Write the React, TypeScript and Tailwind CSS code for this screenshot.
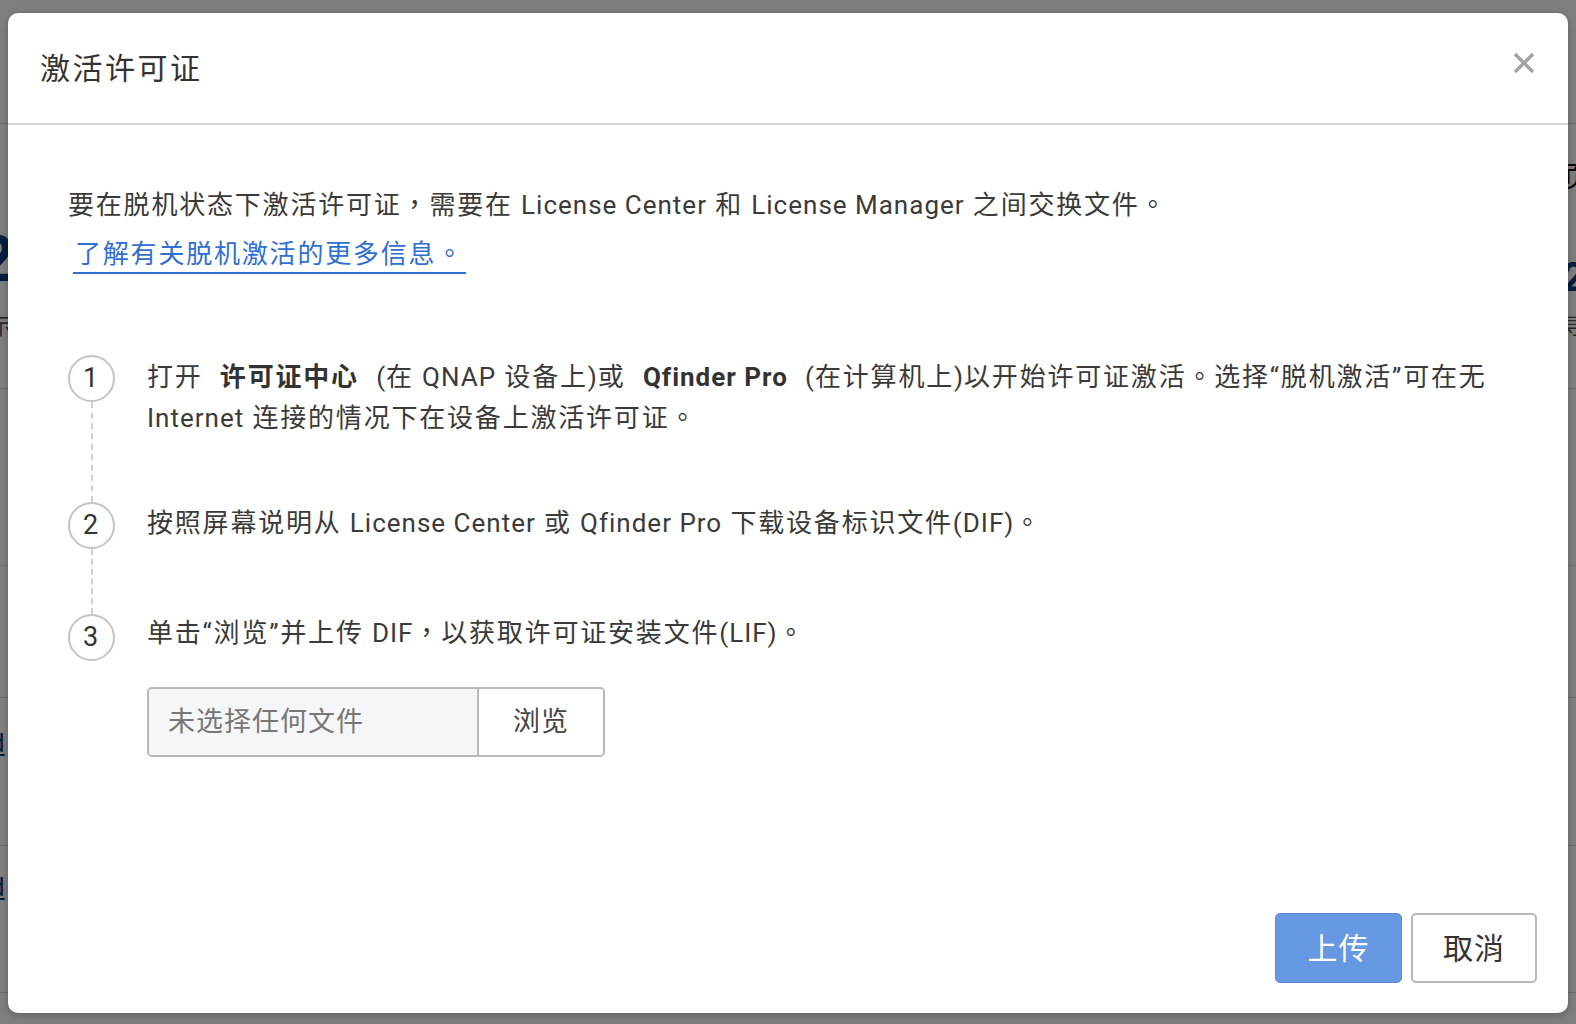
import React from "react";

const FONT = 'Roboto, "Noto Sans CJK TC", "Noto Sans CJK SC", sans-serif';

function L({ children }: { children: React.ReactNode }) {
  return <span className="tracking-[1px]">{children}</span>;
}

function Background() {
  return (
    <div className="absolute inset-0 bg-white overflow-hidden">
      <div className="absolute left-0 right-0 top-[123px] h-px bg-[#d8d8d8]" />
      <div className="absolute left-0 right-0 top-[388px] h-px bg-[#d8d8d8]" />
      <div className="absolute left-0 right-0 top-[565px] h-px bg-[#e0e0e0]" />
      <div className="absolute left-0 right-0 top-[697px] h-px bg-[#d8d8d8]" />
      <div className="absolute left-0 right-0 top-[845px] h-px bg-[#d8d8d8]" />
      <div className="absolute left-0 right-0 top-[992px] h-px bg-[#d8d8d8]" />
      <div className="absolute left-[-22px] top-[228px] text-[64px] font-bold leading-none text-[#0b3f7f]">2</div>
      <div className="absolute left-[-10px] top-[316px] text-[22px] leading-none text-[#555]">示</div>
      <div className="absolute left-[-10px] top-[730px] text-[26px] leading-none text-[#0b3f7f] underline">d</div>
      <div className="absolute left-[-10px] top-[874px] text-[26px] leading-none text-[#0b3f7f] underline">d</div>
      <div className="absolute left-[1562px] top-[162px] text-[30px] leading-none text-[#111]">页</div>
      <div className="absolute left-[1562px] top-[258px] text-[40px] font-bold leading-none text-[#0b3f7f]">2</div>
      <div className="absolute left-[1562px] top-[316px] text-[22px] leading-none text-[#555]">寻</div>
    </div>
  );
}

function StepCircle({ n }: { n: number }) {
  return (
    <div className="w-[47px] h-[47px] shrink-0 rounded-full border-2 border-[#c4c4c4] flex items-center justify-center text-[27px] text-[#333] bg-white">
      {n}
    </div>
  );
}

export default function App() {
  return (
    <div className="relative w-[1576px] h-[1024px] overflow-hidden" style={{ fontFamily: FONT }}>
      <Background />
      <div className="absolute inset-0 bg-black/50" />
      <div className="relative pl-[8px] pt-[13px]">
        <div className="w-[1560px] h-[1000px] bg-white rounded-[10px] flex flex-col shadow-[0_2px_8px_rgba(0,0,0,0.25)]">
          {/* Header */}
          <div className="h-[112px] shrink-0 flex items-center justify-between pl-[32px] pr-[33px] border-b-2 border-[#d4d4d4]">
            <div className="text-[30px] tracking-[2.5px] text-[#333]">激活许可证</div>
            <svg width="22" height="22" viewBox="0 0 22 22" className="mt-[-10px]">
              <path d="M2 2 L20 20 M20 2 L2 20" stroke="#a3a3a3" strokeWidth="3.4" strokeLinecap="butt" />
            </svg>
          </div>

          {/* Body */}
          <div className="flex-1 pl-[60px] pr-[30px] pt-[56px] text-[26px] tracking-[1.8px] text-[#3a3a3a]">
            <div className="leading-[48px]">
              要在脱机状态下激活许可证，需要在 <L>License Center</L> 和 <L>License Manager</L> 之间交换文件。
            </div>
            <div className="flex mt-[7px]">
              <a className="inline-block ml-[5px] px-[2px] leading-[36px] text-[#2f6fd3] border-b-2 border-[#2f6fd3]">
                了解有关脱机激活的更多信息。
              </a>
            </div>

            <div className="mt-[81px] flex flex-col">
              {/* Step 1 */}
              <div className="flex gap-[32px]">
                <div className="flex flex-col items-center w-[47px]">
                  <StepCircle n={1} />
                  <div className="flex-1 border-l-2 border-dashed border-[#d0d0d0]" />
                </div>
                <div className="leading-[41px] pb-[63px] pt-[2px]">
                  打开 <b className="font-bold text-[#333] mx-[9px]">许可证中心</b> <L>(</L>在 <L>QNAP</L> 设备上<L>)</L>或{" "}
                  <b className="font-bold text-[#333] mx-[9px] tracking-[1px]">Qfinder Pro</b> <L>(</L>在计算机上<L>)</L>以开始许可证激活。选择“脱机激活”可在无
                  <br />
                  <L>Internet</L> 连接的情况下在设备上激活许可证。
                </div>
              </div>
              {/* Step 2 */}
              <div className="flex gap-[32px]">
                <div className="flex flex-col items-center w-[47px]">
                  <StepCircle n={2} />
                  <div className="flex-1 border-l-2 border-dashed border-[#d0d0d0]" />
                </div>
                <div className="leading-[41px] pb-[70px] pt-[1px]">
                  按照屏幕说明从 <L>License Center</L> 或 <L>Qfinder Pro</L> 下载设备标识文件<L>(DIF)</L>。
                </div>
              </div>
              {/* Step 3 */}
              <div className="flex gap-[32px]">
                <div className="flex flex-col items-center w-[47px]">
                  <StepCircle n={3} />
                </div>
                <div className="flex flex-col">
                  <div className="leading-[41px] mt-[-1px]">
                    单击“浏览”并上传 <L>DIF</L>，以获取许可证安装文件<L>(LIF)</L>。
                  </div>
                  <div className="mt-[33px] flex w-[458px] h-[70px] border-2 border-[#b8b8b8] rounded-[5px] overflow-hidden">
                    <div className="w-[330px] bg-[#f5f6f8] flex items-center pl-[19px] text-[27px] text-[#777] tracking-[1px] border-r-2 border-[#b8b8b8]">
                      未选择任何文件
                    </div>
                    <div className="flex-1 bg-white flex items-center justify-center text-[27px] text-[#444] tracking-[1px]">
                      浏览
                    </div>
                  </div>
                </div>
              </div>
            </div>
          </div>

          {/* Footer */}
          <div className="flex justify-end gap-[9px] pr-[31px] pb-[30px]">
            <button className="w-[127px] h-[70px] rounded-[5px] bg-[#6699e1] border border-[#5b8dd8] text-white text-[30px] tracking-[1px]">
              上传
            </button>
            <button className="w-[126px] h-[70px] rounded-[5px] bg-white border-2 border-[#b8b8b8] text-[#333] text-[30px] tracking-[1px]">
              取消
            </button>
          </div>
        </div>
      </div>
    </div>
  );
}
